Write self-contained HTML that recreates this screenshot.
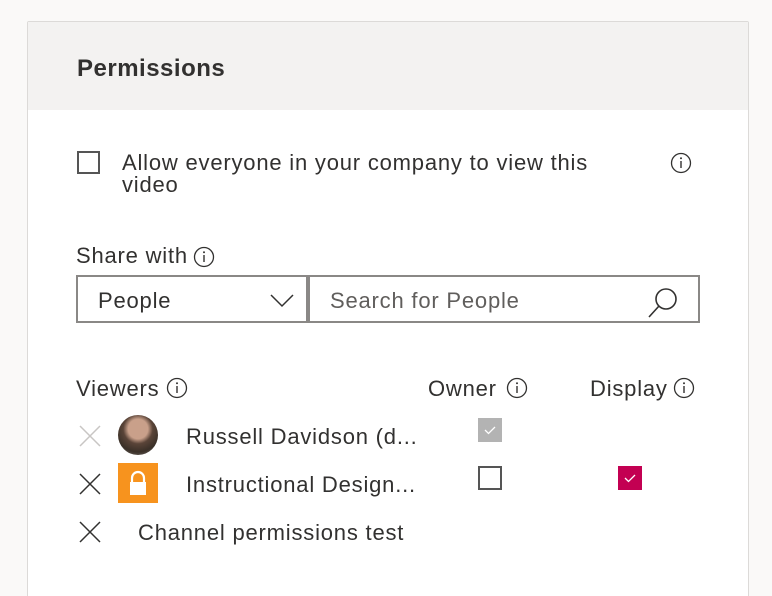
<!DOCTYPE html><html><head><style>
*{margin:0;padding:0;box-sizing:border-box}
html,body{width:772px;height:596px;overflow:hidden}
body{background:#faf9f8;font-family:"Liberation Sans",sans-serif;color:#323130;position:relative}
.panel{position:absolute;left:27px;top:21px;width:722px;height:600px;background:#fff;border:1px solid #dcdad8;border-radius:2px}
.hdr{position:absolute;left:0;top:0;width:100%;height:88px;background:#f3f2f1}
.t{position:absolute;font-size:22px;letter-spacing:0.8px;white-space:nowrap;line-height:24px}
.cb{position:absolute;width:23px;height:23px;border:2px solid #555}
svg{position:absolute}
</style></head><body>
<div class="panel"><div class="hdr"></div></div>
<div class="t" style="left:77px;top:57px;font-size:24px;font-weight:bold;letter-spacing:0.5px">Permissions</div>
<div class="cb" style="left:77px;top:151px"></div>
<div class="t" style="left:122px;top:152px;line-height:22px">Allow everyone in your company to view this<br>video</div>
<svg style="left:670px;top:152px" width="22" height="22"><circle cx="11" cy="11" r="9.5" fill="none" stroke="#323130" stroke-width="1.3"/><line x1="11" y1="9" x2="11" y2="16" stroke="#323130" stroke-width="1.4"/><circle cx="11" cy="6.3" r="1" fill="#323130"/></svg>
<div class="t" style="left:76px;top:244px">Share with</div>
<svg style="left:193px;top:246px" width="22" height="22"><circle cx="11" cy="11" r="9.5" fill="none" stroke="#323130" stroke-width="1.3"/><line x1="11" y1="9" x2="11" y2="16" stroke="#323130" stroke-width="1.4"/><circle cx="11" cy="6.3" r="1" fill="#323130"/></svg>
<div style="position:absolute;left:76px;top:275px;width:232px;height:48px;border:2px solid #8a8886"></div>
<div style="position:absolute;left:308px;top:275px;width:392px;height:48px;border:2px solid #8a8886"></div>
<div class="t" style="left:98px;top:289px">People</div>
<svg style="left:269px;top:292px" width="26" height="16"><polyline points="2,3 13,14 24,3" fill="none" stroke="#323130" stroke-width="1.5"/></svg>
<div class="t" style="left:330px;top:289px;color:#605e5c">Search for People</div>
<svg style="left:645px;top:285px" width="36" height="36"><circle cx="21" cy="14" r="10" fill="none" stroke="#323130" stroke-width="1.6"/><line x1="14" y1="21" x2="4" y2="32" stroke="#323130" stroke-width="1.6"/></svg>
<div class="t" style="left:76px;top:377px">Viewers</div>
<svg style="left:166px;top:377px" width="22" height="22"><circle cx="11" cy="11" r="9.5" fill="none" stroke="#323130" stroke-width="1.3"/><line x1="11" y1="9" x2="11" y2="16" stroke="#323130" stroke-width="1.4"/><circle cx="11" cy="6.3" r="1" fill="#323130"/></svg>
<div class="t" style="left:428px;top:377px">Owner</div>
<svg style="left:506px;top:377px" width="22" height="22"><circle cx="11" cy="11" r="9.5" fill="none" stroke="#323130" stroke-width="1.3"/><line x1="11" y1="9" x2="11" y2="16" stroke="#323130" stroke-width="1.4"/><circle cx="11" cy="6.3" r="1" fill="#323130"/></svg>
<div class="t" style="left:590px;top:377px">Display</div>
<svg style="left:673px;top:377px" width="22" height="22"><circle cx="11" cy="11" r="9.5" fill="none" stroke="#323130" stroke-width="1.3"/><line x1="11" y1="9" x2="11" y2="16" stroke="#323130" stroke-width="1.4"/><circle cx="11" cy="6.3" r="1" fill="#323130"/></svg>
<svg style="left:78px;top:424px" width="24" height="24"><path d="M2 2L22 22M22 2L2 22" stroke="#c8c6c4" stroke-width="1.5"/></svg>
<div style="position:absolute;left:118px;top:415px;width:40px;height:40px;border-radius:50%;background:radial-gradient(circle at 50% 35%,#c9a08a 0 30%,#5a4438 45%,#3a3028 70%,#8a8580 100%)"></div>
<div class="t" style="left:186px;top:425px">Russell Davidson (d...</div>
<div style="position:absolute;left:478px;top:418px;width:24px;height:24px;background:#b3b3b3"></div>
<svg style="left:478px;top:418px" width="24" height="24"><polyline points="7,12 10.5,15.5 17,9" fill="none" stroke="#fff" stroke-width="1.3"/></svg>
<svg style="left:78px;top:472px" width="24" height="24"><path d="M2 2L22 22M22 2L2 22" stroke="#323130" stroke-width="1.5"/></svg>
<div style="position:absolute;left:118px;top:463px;width:40px;height:40px;background:#f7931e"></div>
<svg style="left:118px;top:463px" width="40" height="40"><path d="M14 19V15a6 6 0 0 1 12 0v4" fill="none" stroke="#fff" stroke-width="2.2"/><rect x="12" y="19" width="16" height="13" fill="#fff"/></svg>
<div class="t" style="left:186px;top:473px">Instructional Design...</div>
<div class="cb" style="left:478px;top:466px;width:24px;height:24px"></div>
<div style="position:absolute;left:618px;top:466px;width:24px;height:24px;background:#c30052"></div>
<svg style="left:618px;top:466px" width="24" height="24"><polyline points="7,12 10.5,15.5 17,9" fill="none" stroke="#fff" stroke-width="1.3"/></svg>
<svg style="left:78px;top:520px" width="24" height="24"><path d="M2 2L22 22M22 2L2 22" stroke="#323130" stroke-width="1.5"/></svg>
<div class="t" style="left:138px;top:521px">Channel permissions test</div>
</body></html>
